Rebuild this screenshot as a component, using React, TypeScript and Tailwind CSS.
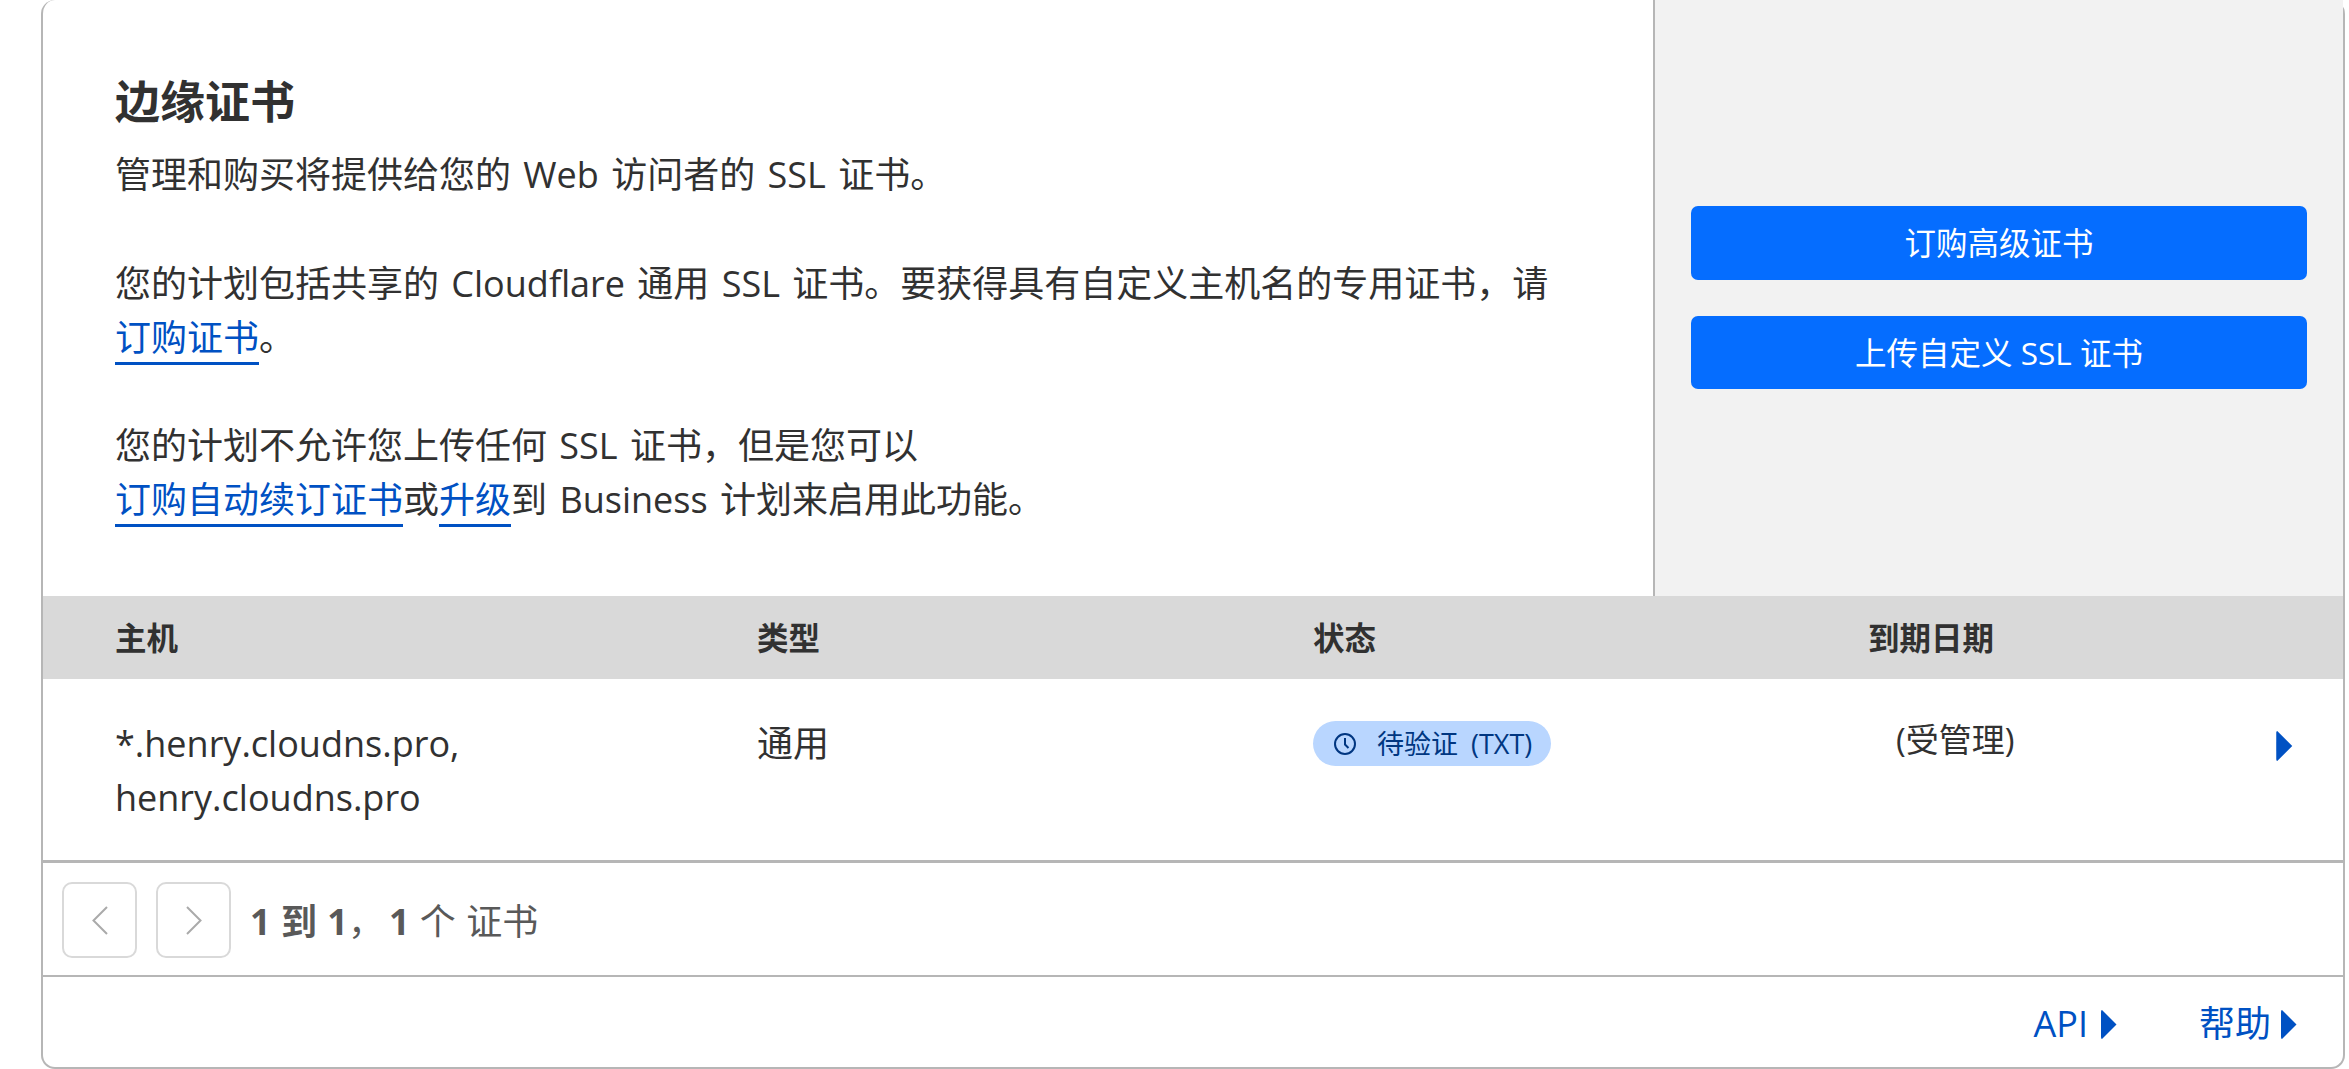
const font = "font-['Open_Sans','Noto_Sans_CJK_SC',sans-serif]";

function Arrow({ className }: { className: string }) {
  return (
    <svg viewBox="0 0 16 29" className={className} fill="#0051c3" aria-hidden="true">
      <path d="M1 0 L15.5 14.5 L1 29 Q0 29 0 27 L0 2 Q0 0 1 0 Z" />
    </svg>
  );
}

function Chevron({ dir }: { dir: 'left' | 'right' }) {
  return (
    <button className="flex h-[76px] w-[75px] items-center justify-center rounded-[10px] border-2 border-[#d9d9d9] bg-white">
      <svg viewBox="0 0 16 29" className="h-[29px] w-[16px]" fill="none" stroke="#aaaaaa" strokeWidth="2">
        <path d={dir === 'left' ? 'M15 1 L1.5 14.5 L15 28' : 'M1 1 L14.5 14.5 L1 28'} />
      </svg>
    </button>
  );
}

function TextLink({ children }: { children: React.ReactNode }) {
  return <a href="#" className="border-b-[3px] border-[#0051c3] text-[#0051c3]">{children}</a>;
}

export default function App() {
  return (
    <div className={`${font} h-[1069px] overflow-hidden bg-white pl-[41px] pr-[4px] text-[36px] leading-[54px] text-[#313131]`}>
      <div className="flex h-[1069px] flex-col rounded-b-[14px] rounded-t-[14px] border-x-2 border-b-2 border-[#b6b6b6]">
        {/* Intro */}
        <section className="flex h-[596px] shrink-0">
          <div className="w-[1612px] shrink-0 border-r-2 border-[#b6b6b6] pl-[72px] pt-[72px] [word-spacing:3px]">
            <h2 className="mb-[16px] text-[45px] font-bold leading-[60px] text-[#313131]">边缘证书</h2>
            <p>管理和购买将提供给您的 Web 访问者的 SSL 证书。</p>
            <p className="mt-[55px]">
              您的计划包括共享的 Cloudflare 通用 SSL 证书。要获得具有自定义主机名的专用证书，请
              <br />
              <TextLink>订购证书</TextLink>。
            </p>
            <p className="mt-[54px]">
              您的计划不允许您上传任何 SSL 证书，但是您可以
              <br />
              <TextLink>订购自动续订证书</TextLink>或<TextLink>升级</TextLink>到 Business 计划来启用此功能。
            </p>
          </div>
          <div className="flex flex-1 flex-col gap-[36px] bg-[#f2f2f2] px-[36px] pt-[206px]">
            <button className="h-[74px] rounded-[7px] bg-[#056dff] text-[31.5px] text-white">订购高级证书</button>
            <button className="h-[73px] rounded-[7px] bg-[#056dff] text-[31.5px] text-white">上传自定义 SSL 证书</button>
          </div>
        </section>

        {/* Table */}
        <div className="grid h-[83px] shrink-0 grid-cols-[642px_556px_555px_1fr] items-center bg-[#d9d9d9] pl-[72px] pt-[1px] text-[31.5px] font-bold text-[#313131]">
          <div>主机</div>
          <div>类型</div>
          <div>状态</div>
          <div>到期日期</div>
        </div>
        <div className="grid h-[184px] shrink-0 grid-cols-[642px_556px_555px_1fr] border-b-[3px] border-[#b6b6b6] pl-[72px] pt-[38px]">
          <div>
            *.henry.cloudns.pro,
            <br />
            henry.cloudns.pro
          </div>
          <div>通用</div>
          <div>
            <span className="mt-[4px] flex h-[45px] w-[238px] items-center gap-[21px] rounded-full bg-[#b9d6ff] pl-[21px] text-[27px] leading-[45px] text-[#003681] [word-spacing:6px]">
              <svg viewBox="0 0 22 22" className="h-[22px] w-[22px]" fill="none" stroke="#003681" strokeWidth="2">
                <circle cx="11" cy="11" r="10" />
                <path d="M11 5 V11.5 L14.5 15" />
              </svg>
              待验证 (TXT)
            </span>
          </div>
          <div className="flex justify-between pl-[28px] pr-[50px] text-[33px]">
            <span className="leading-[45px]">(受管理)</span>
            <Arrow className="mt-[14px] h-[30px] w-[17px]" />
          </div>
        </div>

        {/* Pager */}
        <div className="flex h-[114px] shrink-0 items-center gap-[19px] border-b-2 border-[#b6b6b6] pl-[19px] pt-[2px] text-[#595959]">
          <Chevron dir="left" />
          <Chevron dir="right" />
          <div className="mt-[4px] [word-spacing:1px]">
            <b>1 到 1</b>，<b className="ml-[5px]">1</b> 个 证书
          </div>
        </div>

        {/* Footer links */}
        <div className="flex flex-1 items-center justify-end gap-[82px] pr-[46px] pt-[4px] text-[#0051c3]">
          <a href="#" className="flex items-center gap-[13px]">API <Arrow className="h-[29px] w-[16px]" /></a>
          <a href="#" className="flex items-center gap-[10px]">帮助 <Arrow className="h-[29px] w-[16px]" /></a>
        </div>
      </div>
    </div>
  );
}
